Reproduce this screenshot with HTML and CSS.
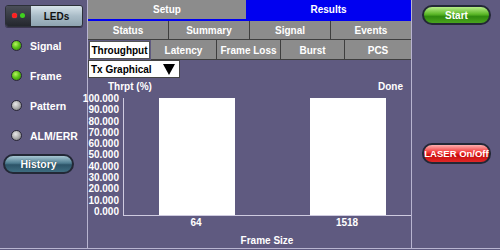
FILE: index.html
```html
<!DOCTYPE html>
<html>
<head>
<meta charset="utf-8">
<link rel="stylesheet" href="styles.css">
</head>
<body>
<div class="screen">
  <aside class="left">
    <div class="leds-btn">
      <div class="leds-dots"><span class="dot red"></span><span class="dot green"></span></div>
      <div class="leds-label">LEDs</div>
    </div>
    <ul class="indicators">
      <li><span class="led on"></span>Signal</li>
      <li><span class="led on"></span>Frame</li>
      <li><span class="led off"></span>Pattern</li>
      <li><span class="led off"></span>ALM/ERR</li>
    </ul>
    <div class="pill history">History</div>
  </aside>

  <main class="main">
    <div class="tabs row1">
      <div class="tab setup">Setup</div>
      <div class="tab results">Results</div>
    </div>
    <div class="tabs row2">
      <div class="tab">Status</div>
      <div class="tab">Summary</div>
      <div class="tab">Signal</div>
      <div class="tab">Events</div>
    </div>
    <div class="tabs row3">
      <div class="tab active w63">Throughput</div>
      <div class="tab w66">Latency</div>
      <div class="tab w64">Frame Loss</div>
      <div class="tab w64">Burst</div>
      <div class="tab w66">PCS</div>
    </div>

    <section class="chart">
      <div class="dropdown"><span>Tx Graphical</span><span class="arrow"></span></div>
      <div class="chart-head"><span class="ytitle">Thrpt (%)</span><span class="done">Done</span></div>
      <div class="plot-row">
        <div class="ylabels">
          <span>100.000</span><span>90.000</span><span>80.000</span><span>70.000</span><span>60.000</span>
          <span>50.000</span><span>40.000</span><span>30.000</span><span>20.000</span><span>10.000</span><span>0.000</span>
        </div>
        <div class="plot-wrap">
          <div class="plot">
            <div class="bar-slot"><div class="bar" style="height:100%"></div></div>
            <div class="bar-slot"><div class="bar" style="height:100%"></div></div>
          </div>
          <div class="xlabels"><span>64</span><span>1518</span></div>
          <div class="xtitle">Frame Size</div>
        </div>
      </div>
    </section>
  </main>

  <aside class="right">
    <div class="pill start">Start</div>
    <div class="pill laser">LASER On/Off</div>
  </aside>
</div>
</body>
</html>
```

FILE: styles.css
```css
* { box-sizing: border-box; margin: 0; padding: 0; }
html, body { width: 500px; height: 250px; overflow: hidden; }
body {
  background: #5f5a80;
  font-family: "Liberation Sans", Arial, sans-serif;
  font-weight: bold;
  font-size: 10px;
  color: #fff;
}
.screen {
  display: flex;
  height: 249px;
  border-bottom: 1px solid #b8b4d0;
}

/* left sidebar */
.left {
  width: 88px;
  border-right: 1px solid #b8b4d0;
  padding: 5px 0 0 0;
  display: flex;
  flex-direction: column;
}
.leds-btn {
  margin-left: 5px;
  width: 78px;
  height: 22px;
  display: flex;
  border-radius: 3px;
  overflow: hidden;
  border: 1px solid #2c3038;
  box-shadow: 0 1px 0 #3a3550;
}
.leds-dots {
  width: 25px;
  background: linear-gradient(#4a4e58, #24272e);
  display: flex;
  align-items: center;
  justify-content: center;
  gap: 3px;
  padding-bottom: 2px;
}
.dot { width: 5px; height: 5px; border-radius: 50%; }
.dot.red { background: #ff2020; box-shadow: 0 0 1px #ff6060; }
.dot.green { background: #40d020; }
.leds-label {
  flex: 1;
  background: linear-gradient(#d8e4ea 0%, #a9bcc7 50%, #8ea4b1 100%);
  color: #111;
  display: flex;
  align-items: center;
  justify-content: center;
}
.indicators {
  list-style: none;
  margin-top: 13px;
  display: flex;
  flex-direction: column;
  gap: 19px;
}
.indicators li {
  display: flex;
  align-items: center;
  height: 11px;
  padding-left: 11px;
  font-size: 10.5px;
}
.led {
  width: 11px;
  height: 11px;
  border-radius: 50%;
  margin-right: 8px;
  border: 1.5px solid #2a2838;
}
.led.on { background: radial-gradient(circle at 40% 35%, #b8f060 0%, #5cc418 45%, #2f7a08 100%); }
.led.off { background: radial-gradient(circle at 40% 35%, #e8e8e8 0%, #b0b0b0 50%, #6c6c6c 100%); }

.pill {
  display: flex;
  align-items: center;
  justify-content: center;
  border-radius: 10px;
  border: 2px solid #232836;
  color: #fff;
  white-space: nowrap;
}
.history {
  margin: 13px 0 0 3px;
  width: 71px;
  height: 20px;
  background: linear-gradient(#a8c8d4 0%, #4e7c90 45%, #2c5468 55%, #3e6c80 100%);
  text-shadow: 0 0 1px #1d3540;
  font-size: 10.5px;
}

/* main */
.main {
  width: 323px;
  display: flex;
  flex-direction: column;
}
.tabs { display: flex; }
.tab {
  background: #8c8c8c;
  border-right: 1px solid #3e3e3e;
  border-bottom: 1px solid #3e3e3e;
  display: flex;
  align-items: center;
  justify-content: center;
  white-space: nowrap;
}
.tab:last-child { border-right: none; }
.row1 { height: 21px; }
.row1 .setup { width: 158px; border-bottom: 2px solid #0000f0; border-right: none; }
.row1 .results { flex: 1; background: #0000f0; border-bottom: 2px solid #0000f0; }
.row2 { height: 19px; }
.row2 .tab { flex: 1; }
.row3 { height: 20px; }
.row3 .tab { padding-top: 1px; }
.w63 { width: 63px; }
.w66 { width: 66px; }
.w64 { width: 64px; }
.tab.active { background: #fff; color: #000; border: 1px solid #555; margin: 1px; width: 61px; }

.chart { flex: 1; }
.dropdown {
  width: 92px;
  height: 18px;
  background: #fff;
  color: #000;
  border: 1px solid #444;
  display: flex;
  align-items: center;
  justify-content: space-between;
  padding: 0 4px 0 2px;
}
.arrow {
  width: 0; height: 0;
  border-left: 6px solid transparent;
  border-right: 6px solid transparent;
  border-top: 11px solid #000;
}
.chart-head {
  height: 14px;
  display: flex;
  justify-content: space-between;
  align-items: center;
  padding: 2px 8px 0 20px;
}
.plot-row { display: flex; margin-top: 1px; }
.ylabels {
  width: 33px;
  height: 124px;
  display: flex;
  flex-direction: column;
  justify-content: space-between;
  align-items: flex-end;
  line-height: 11px;
  margin-right: 2px;
}
.ylabels span { padding-right: 2px; }
.plot-wrap { flex: 1; padding-top: 5px; }
.plot {
  height: 118px;
  border-left: 1px solid #cfcbe0;
  border-bottom: 1px solid #cfcbe0;
  display: flex;
  align-items: flex-end;
  padding-left: 35px;
  gap: 75px;
}
.bar-slot { width: 76px; height: 100%; display: flex; align-items: flex-end; }
.bar { width: 100%; background: #fff; }
.xlabels {
  display: flex;
  padding-left: 35px;
  gap: 75px;
  height: 13px;
  align-items: center;
}
.xlabels span { width: 76px; text-align: center; }
.xtitle { text-align: center; margin-top: 6px; }

/* right sidebar */
.right {
  flex: 1;
  border-left: 1px solid #b8b4d0;
  display: flex;
  flex-direction: column;
  padding: 5px 0 0 10px;
}
.start {
  width: 69px;
  height: 20px;
  background: linear-gradient(#b8ec88 0%, #5cb828 45%, #2f8a0e 60%, #4aa41e 100%);
}
.laser {
  margin-top: 118px;
  width: 69px;
  height: 21px;
  font-size: 9.5px;
  background: linear-gradient(#ffb0b0 0%, #f03030 45%, #c80c0c 60%, #e02828 100%);
}
```
